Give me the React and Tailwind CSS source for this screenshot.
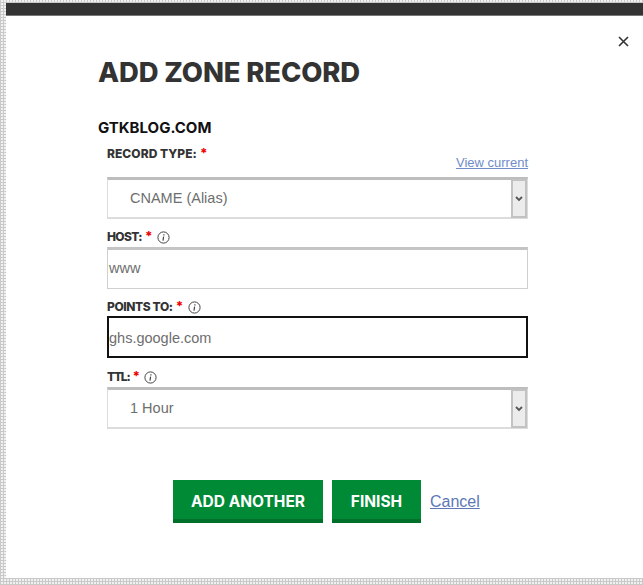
const Arial = "font-['Liberation_Sans',Arial,sans-serif]";

function Info() {
  return (
    <svg width="13" height="13" viewBox="0 0 13 13" className="ml-[5px] shrink-0">
      <circle cx="6.5" cy="6.5" r="5.6" fill="none" stroke="#444" strokeWidth="1" />
      <path d="M6.9 3.2v1.2M6.6 5.7L6 9.6" fill="none" stroke="#444" strokeWidth="1.2" />
    </svg>
  );
}

function Label({ children, info, className = "" }) {
  return (
    <div className={`flex items-center h-[16px] text-[12px] font-extrabold text-[#333] font-['Inter',sans-serif] ${className}`}>
      <span>{children}:</span>
      <span className="ml-[3px] text-[#e00] text-[13px]">*</span>
      {info && <Info />}
    </div>
  );
}

function SelectBox({ value }) {
  return (
    <div className={`flex h-[42px] w-[421px] border-[1px] border-b-[2px] border-t-[3px] border-[#dcdcdc] border-t-[#bdbdbd] bg-white ${Arial}`}>
      <div className="flex-1 flex items-center pl-[22px] text-[14.5px] text-[#6e6e6e]">{value}</div>
      <div className="w-[16px] -mt-[1px] -mb-[1px] flex items-center justify-center bg-[#ececec] border-[2px] border-[#c2c2c2]">
        <svg width="8" height="6" viewBox="0 0 8 6">
          <path d="M1 1L4 4L7 1" fill="none" stroke="#555" strokeWidth="1.8" />
        </svg>
      </div>
    </div>
  );
}

function TextBox({ value, focused }) {
  const border = focused
    ? "pt-[3px] border-[2px] border-[#111]"
    : "pl-[1px] border-[1px] border-[#d0d0d0] border-t-[3px] border-t-[#c4c4c4]";
  return (
    <div className={`flex items-center h-[42px] w-[421px] bg-white text-[14.5px] text-[#6e6e6e] ${border} ${Arial}`}>
      {value}
    </div>
  );
}

export default function App() {
  return (
    <div className="h-[585px] w-[643px] overflow-hidden pl-[6px] pt-[3px] pb-[7px] bg-[#f1f1f1] bg-[repeating-linear-gradient(0deg,#c9c9c9_0_1px,transparent_1px_3px),repeating-linear-gradient(90deg,#c9c9c9_0_1px,transparent_1px_3px)]">
      <div className="relative h-full bg-white">
        <div className="h-[13px] bg-[#333] border-b border-[#777]" />
        <svg width="11" height="11" viewBox="0 0 11 11" className="absolute right-[14px] top-[33px]">
          <path d="M1 1L10 10M10 1L1 10" stroke="#333" strokeWidth="1.6" />
        </svg>
        <div className="pl-[92px]">
          <h1 className="mt-[38px] h-[36px] text-[27.4px] leading-[36px] font-extrabold text-[#333] tracking-[-0.1px] font-['Inter',sans-serif]">
            ADD ZONE RECORD
          </h1>
          <div className="mt-[29px] h-[18px] text-[15px] leading-[18px] font-bold text-[#111] font-['Inter',sans-serif]">
            GTKBLOG.COM
          </div>
          <div className="ml-[9px] w-[421px]">
            <div className="flex justify-between items-start mt-[9px] h-[24px]">
              <Label className="tracking-[0.05px]">RECORD TYPE</Label>
              <a className={`mt-[9px] text-[13px] leading-[15px] text-[#6f8cc9] underline ${Arial}`}>View current</a>
            </div>
            <div className="mt-[7px]"><SelectBox value="CNAME (Alias)" /></div>
            <Label info className="mt-[10px] tracking-[-0.65px]">HOST</Label>
            <div className="mt-[2px]"><TextBox value="www" /></div>
            <Label info className="mt-[10px] tracking-[-0.4px]">POINTS TO</Label>
            <div className="mt-[1px]"><TextBox value="ghs.google.com" focused /></div>
            <Label info className="mt-[11px] tracking-[-1.2px]">TTL</Label>
            <div className="mt-[2px]"><SelectBox value="1 Hour" /></div>
          </div>
          <div className="mt-[51px] ml-[75px] flex items-center">
            <button className="h-[43px] w-[150px] bg-[#008a35] shadow-[inset_0_-4px_0_#006f2a] text-white text-[15.5px] font-bold font-['Inter',sans-serif]">ADD ANOTHER</button>
            <button className="ml-[9px] h-[43px] w-[89px] bg-[#008a35] shadow-[inset_0_-4px_0_#006f2a] text-white text-[15.5px] font-bold font-['Inter',sans-serif]">FINISH</button>
            <a className={`ml-[9px] text-[16px] text-[#5d78b5] underline ${Arial}`}>Cancel</a>
          </div>
        </div>
      </div>
    </div>
  );
}
